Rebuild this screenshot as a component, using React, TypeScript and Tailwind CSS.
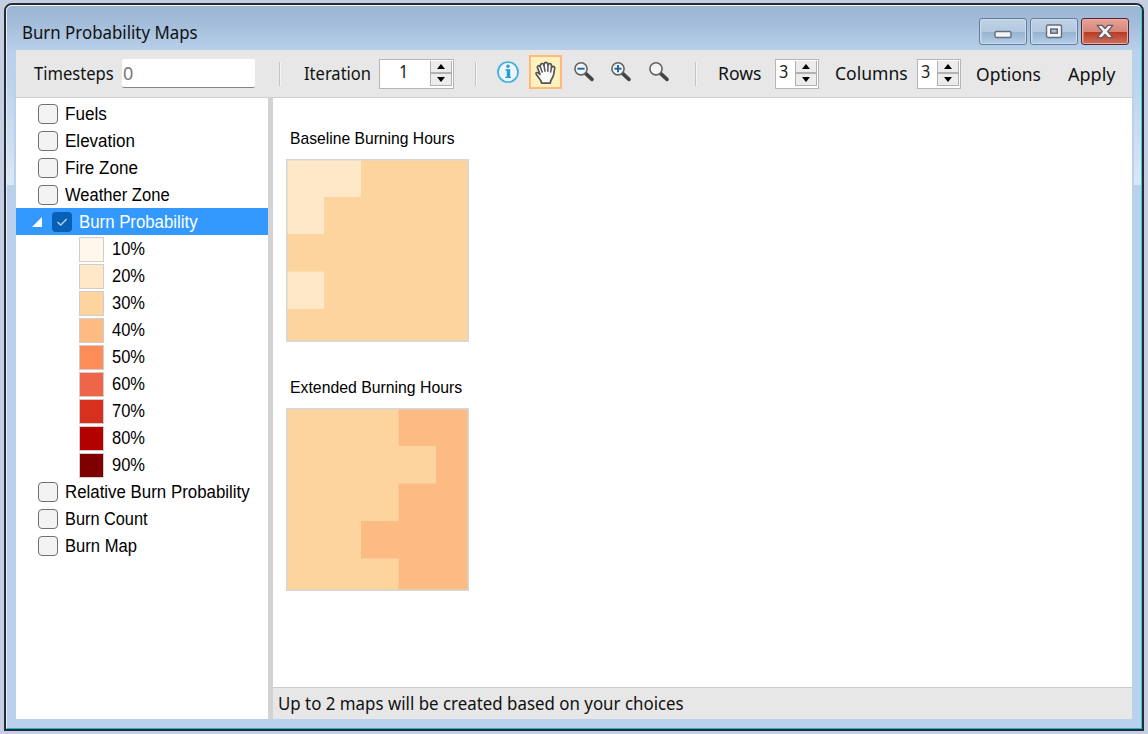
import { useLayoutEffect, useRef, type ReactNode } from "react";

/** Single-line text condensed horizontally to occupy a given width. */
function Label({ w, className = "", children }: { w: number; className?: string; children: string }) {
  const ref = useRef<HTMLSpanElement>(null);
  useLayoutEffect(() => {
    const el = ref.current;
    if (el) el.style.transform = `scaleX(${w / el.offsetWidth})`;
  }, [w]);
  return (
    <span className={`flex shrink-0 ${className}`} style={{ width: w }}>
      <span ref={ref} className="shrink-0 origin-left whitespace-nowrap">
        {children}
      </span>
    </span>
  );
}

const ui = "font-['Noto_Sans',sans-serif] text-[18px] leading-[24px] text-[#111]";
const classic = "font-['Liberation_Sans',sans-serif] text-[17.5px] leading-[24px]";

function Separator({ className }: { className: string }) {
  return <span className={`h-6 w-[2px] shrink-0 border-l border-r border-l-[#c3c3c3] border-r-[#f5f5f5] ${className}`} />;
}

function Spinner({ value, className, pad }: { value: string; className: string; pad: string }) {
  return (
    <div className={`flex h-[30px] shrink-0 border-[1.5px] border-[#b5b6ba] bg-white ${className}`}>
      <span className={`-mt-px flex-1 font-['Noto_Sans',sans-serif] text-[18px] leading-[24px] text-[#222] ${pad}`}>
        <span className="inline-block origin-left scale-x-90">{value}</span>
      </span>
      <div className="mt-px mr-px mb-[2px] flex w-[22px] flex-col border-x border-b border-[#b1b1b1] bg-[#b1b1b1]">
        <span className="flex flex-1 items-center justify-center bg-[#ececec]">
          <svg width="8" height="5" viewBox="0 0 8 5"><path d="M4 0L8 5H0z" fill="#000" /></svg>
        </span>
        <span className="h-[2px]" />
        <span className="flex flex-1 items-center justify-center bg-[#ececec]">
          <svg width="8" height="5" viewBox="0 0 8 5"><path d="M0 0H8L4 5z" fill="#000" /></svg>
        </span>
      </div>
    </div>
  );
}

function Magnifier({ kind, className }: { kind?: "in" | "out"; className: string }) {
  return (
    <svg width="22" height="22" viewBox="0 0 22 22" className={`mb-[3px] shrink-0 ${className}`} fill="none">
      <path d="M12.8 12.6L19 18.4" stroke="#444" strokeWidth="3.6" strokeLinecap="round" />
      <circle cx="8" cy="7.8" r="6.1" fill="#f5f5f5" stroke="#626262" strokeWidth="1.6" />
      {kind && <path d="M4.4 7.7H11.6" stroke="#1666b0" strokeWidth="1.9" />}
      {kind === "in" && <path d="M8 4.1V11.3" stroke="#1666b0" strokeWidth="1.9" />}
    </svg>
  );
}

function Toolbar() {
  return (
    <div className="flex h-[48px] shrink-0 items-center border-b border-[#cfcfcf] bg-[#e7e7e7] pl-[18px]">
      <Label w={80} className={`mb-[2px] ${ui}`}>Timesteps</Label>
      <div className="ml-2 flex h-[29px] w-[133px] shrink-0 items-center rounded-[2px] border-b-[1.5px] border-[#858585] bg-white pl-px">
        <Label w={10} className="font-['Noto_Sans',sans-serif] text-[18px] leading-6 text-[#777]">0</Label>
      </div>
      <Separator className="ml-6" />
      <Label w={67} className={`mb-[2px] ml-[23px] ${ui}`}>Iteration</Label>
      <Spinner value="1" className="ml-[8px] w-[75px]" pad="pl-[19px]" />
      <Separator className="ml-[21px]" />
      <svg width="22" height="22" viewBox="0 0 22 22" className="mb-[3px] ml-[20px] shrink-0" fill="none">
        <circle cx="11" cy="11" r="10" fill="#eef4f8" stroke="#3dafe5" strokeWidth="1.7" />
        <circle cx="11" cy="5.3" r="1.7" fill="#209fdd" />
        <path d="M8.5 9H12.5V16M8.3 16.3H14" stroke="#209fdd" strokeWidth="1.3" />
        <path d="M11.2 8.5V16.5" stroke="#209fdd" strokeWidth="2.8" />
      </svg>
      <div className="mb-[3px] ml-[10px] flex h-[34px] w-[33px] shrink-0 items-center justify-center border-2 border-[#ffb978] bg-[#fff2bd]">
        <svg width="24" height="25" viewBox="0 0 24 25" fill="none" strokeLinejoin="round" strokeLinecap="round" stroke="#555">
          <path
            d="M7.6 23.2C7.4 20.6 5.8 19.2 4.4 17.2C3.2 15.4 1.4 14.2 2 13C2.9 11.8 4.6 13 6 14.4L3.4 7.6C3 5.8 5.3 5 6.2 6.7C6.4 5.6 6.4 4 7.6 3.6C8.9 3.2 9.5 4 9.9 5.2C10 3.5 10.7 2.4 12 2.4C13.3 2.4 13.8 3.5 14 5.2C14.5 3.7 15.4 3.3 16.4 3.7C17.7 4.2 17.7 5.6 17.5 7.6C18.3 6.6 19.3 6.2 20.2 6.8C21.3 7.6 20.8 8.8 20.4 10C19.9 12 20.1 13.6 19.2 16C18.5 18.3 16.4 19.8 16.2 23.2Z"
            fill="#fafafa" strokeWidth="1.7"
          />
          <path d="M6.2 6.7L8.2 12M9.9 5.2L11 11.2M14 5.2L13.8 11.2M17.5 7.6L16.6 12" strokeWidth="1.5" />
        </svg>
      </div>
      <Magnifier kind="out" className="ml-[11px]" />
      <Magnifier kind="in" className="ml-[15px]" />
      <Magnifier className="ml-[16px]" />
      <Separator className="ml-[25px]" />
      <Label w={44} className={`mb-[2px] ml-[21px] ${ui}`}>Rows</Label>
      <Spinner value="3" className="ml-[13px] w-[44px]" pad="pl-[3px]" />
      <Label w={73} className={`mb-[2px] ml-[16px] ${ui}`}>Columns</Label>
      <Spinner value="3" className="ml-[9px] w-[44px]" pad="pl-[3px]" />
      <Label w={65} className={`mt-px ml-[15px] ${ui}`}>Options</Label>
      <Label w={47} className={`mt-px ml-[27px] ${ui}`}>Apply</Label>
    </div>
  );
}

function CheckRow({ w, children }: { w: number; children: string }) {
  return (
    <div className="flex h-[27px] items-center pl-[22px]">
      <span className="size-5 shrink-0 rounded-[4px] border-[1.5px] border-[#717171] bg-[#f3f3f3]" />
      <Label w={w} className={`ml-[7px] text-black ${classic}`}>{children}</Label>
    </div>
  );
}

const legend = [
  ["10%", "#fff7ec"],
  ["20%", "#fee8c8"],
  ["30%", "#fdd49e"],
  ["40%", "#fdbb84"],
  ["50%", "#fc8d59"],
  ["60%", "#ef6548"],
  ["70%", "#d7301f"],
  ["80%", "#b30000"],
  ["90%", "#7f0000"],
];

function Tree() {
  return (
    <div className="w-[252px] shrink-0 bg-white pt-[2px]">
      <CheckRow w={42}>Fuels</CheckRow>
      <CheckRow w={70}>Elevation</CheckRow>
      <CheckRow w={73}>Fire Zone</CheckRow>
      <CheckRow w={105}>Weather Zone</CheckRow>
      <div className="flex h-[27px] items-center bg-[#3399ff] pl-4">
        <svg width="10" height="10" viewBox="0 0 10 10"><path d="M10 0V10H0z" fill="#fff" /></svg>
        <span className="ml-[10px] flex size-5 shrink-0 items-center justify-center rounded-[4px] bg-[#0560b6]">
          <svg width="12" height="10" viewBox="0 0 12 10" fill="none"><path d="M1.5 5L4.7 8L10.7 2" stroke="#b9d5ed" strokeWidth="1.3" /></svg>
        </span>
        <Label w={119} className={`ml-[7px] text-white ${classic}`}>Burn Probability</Label>
      </div>
      {legend.map(([name, color]) => (
        <div key={name} className="flex h-[27px] items-center pl-[63px]">
          <span className="mt-px size-[25px] shrink-0 border border-[#d2cdcb]" style={{ backgroundColor: color }} />
          <Label w={33} className={`ml-[8px] text-black ${classic}`}>{name}</Label>
        </div>
      ))}
      <CheckRow w={185}>Relative Burn Probability</CheckRow>
      <CheckRow w={83}>Burn Count</CheckRow>
      <CheckRow w={72}>Burn Map</CheckRow>
    </div>
  );
}

function MapTile({ base, patch, d }: { base: string; patch: string; d: string }) {
  return (
    <svg width="183" height="183" viewBox="0 0 183 183" className="block">
      <rect width="183" height="183" fill={base} />
      <path d={d} fill={patch} />
      <rect x=".75" y=".75" width="181.5" height="181.5" fill="none" stroke="#d6d6d6" strokeWidth="1.5" />
    </svg>
  );
}

function WindowButton({ close, children }: { close?: boolean; children: ReactNode }) {
  return (
    <span
      className={`flex h-[27px] w-[48px] items-center justify-center rounded-[3px] border-[1.5px] ${
        close
          ? "border-[#5c2334] bg-linear-to-b from-[#e5a59b] from-0% via-[#d88678] via-48% to-[#cf7766] shadow-[inset_0_0_0_1px_#e6afa5]"
          : "border-[#667c9a] bg-linear-to-b from-[#c0d2e6] from-0% via-[#b4c9e1] via-48% to-[#b5d0e9] shadow-[inset_0_0_0_1px_#cbdced]"
      }`}
    >
      <span
        className={`flex h-[22px] w-[43px] items-center justify-center bg-linear-to-b from-transparent from-50% via-50% ${
          close ? "via-[#b83820] to-[#cc6a55]" : "via-[#97b2cf] to-[#b1cce6]"
        }`}
      >
        {children}
      </span>
    </span>
  );
}

function TitleBar() {
  return (
    <div className="flex h-[44px] shrink-0 justify-between pr-[3px] pl-[6px]">
      <Label w={176} className={`mt-[14px] ${ui}`}>Burn Probability Maps</Label>
      <div className="mt-[12px] flex gap-[3px]">
        <WindowButton>
          <svg width="18" height="14" viewBox="0 0 18 14"><rect x="1" y="6.5" width="16" height="6" rx="1.5" fill="#f3f5f7" stroke="#646e7c" strokeWidth="1.4" /></svg>
        </WindowButton>
        <WindowButton>
          <svg width="18" height="15" viewBox="0 0 18 15">
            <rect x="1.5" y="1" width="15" height="12.5" rx="1.5" fill="#f3f5f7" stroke="#646e7c" strokeWidth="1.4" />
            <rect x="5.7" y="5" width="6.6" height="4.2" fill="#a8bed5" stroke="#505d70" strokeWidth="1.3" />
          </svg>
        </WindowButton>
        <WindowButton close>
          <svg width="18" height="15" viewBox="0 0 18 15">
            <path d="M1.2 1.3H6L9 4.5L12 1.3H16.8L11.7 7.5L16.8 13.7H12L9 10.5L6 13.7H1.2L6.3 7.5z" fill="#f4f4f5" stroke="#645d68" strokeWidth="1.3" strokeLinejoin="round" />
          </svg>
        </WindowButton>
      </div>
    </div>
  );
}

function SideGlow({ className }: { className: string }) {
  return <div className={`h-[179px] w-[7px] shrink-0 bg-linear-to-b from-transparent from-35% to-[#dbe7f5] ${className}`} />;
}

export default function App() {
  return (
    <div className="h-[734px] w-[1148px] overflow-hidden bg-[#c5cfe1] pt-[3px] pl-[4px]">
      <div className="h-[728px] w-[1140px] rounded-t-[8px] border-2 border-[#252b34]">
        <div className="flex h-full rounded-t-[6px] border border-t-[#f4f8fc] border-r-[#35cbdc] border-b-[#18bdcf] border-l-[#e4edf8] bg-[linear-gradient(to_bottom,#9ab4d1_0px,#a4bdda_18px,#b9d1ea_46px,#b9d1ea_100%)]">
          <SideGlow className="mr-[2px]" />
          <div className="flex w-[1116px] shrink-0 flex-col pb-[9px]">
            <TitleBar />
            <Toolbar />
            <div className="flex min-h-0 flex-1">
              <Tree />
              <div className="w-[5px] shrink-0 bg-[#d3d3d3]" />
              <div className="flex min-w-0 flex-1 flex-col bg-white">
                <div className="flex flex-1 flex-col pt-[29px] pl-[13px]">
                  <Label w={165} className={`ml-[4px] text-black ${classic} text-[17px]!`}>Baseline Burning Hours</Label>
                  <div className="mt-[8px]">
                    <MapTile base="#fdd49e" patch="#fee8c8" d="M0 0H75V38H38V75H0zM0 112.5H38V150H0z" />
                  </div>
                  <Label w={172} className={`mt-[34px] ml-[4px] text-black ${classic} text-[17px]!`}>Extended Burning Hours</Label>
                  <div className="mt-[8px]">
                    <MapTile base="#fdd49e" patch="#fdbb84" d="M112.5 0H183V183H112.5V150.5H75V113H112.5V75.5H150V38H112.5z" />
                  </div>
                </div>
                <div className="flex h-[32px] shrink-0 items-center border-t border-[#cbcbcb] bg-[#e7e7e7] pb-px pl-[5px]">
                  <Label w={406} className={ui}>Up to 2 maps will be created based on your choices</Label>
                </div>
              </div>
            </div>
          </div>
          <SideGlow className="ml-[2px]" />
        </div>
      </div>
    </div>
  );
}
